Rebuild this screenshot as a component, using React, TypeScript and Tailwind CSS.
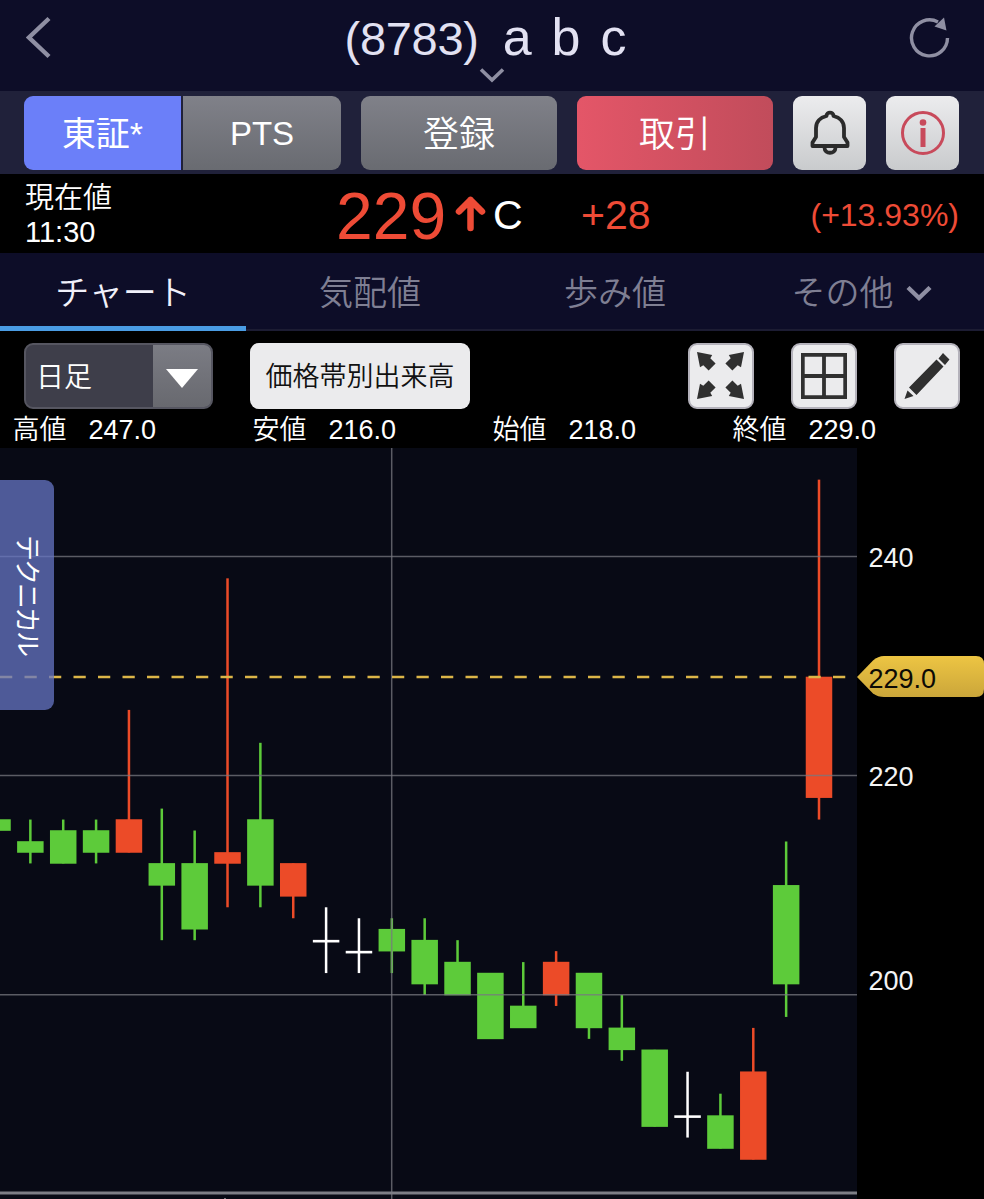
import React from "react";

type Kind = "up" | "down" | "flat";
type Candle = [kind: Kind, top: number, bottom: number, high: number, low: number];

// Newest session first.
const CANDLES: Candle[] = [
  ["up", 229, 218, 247, 216],
  ["down", 210, 201, 214, 198],
  ["up", 193, 185, 197, 185],
  ["down", 189, 186, 191, 186],
  ["flat", 189, 189, 193, 187],
  ["down", 195, 188, 195, 188],
  ["down", 197, 195, 200, 194],
  ["down", 202, 197, 202, 196],
  ["up", 203, 200, 204, 199],
  ["down", 199, 197, 203, 197],
  ["down", 202, 196, 202, 196],
  ["down", 203, 200, 205, 200],
  ["down", 205, 201, 207, 200],
  ["down", 206, 204, 207, 202],
  ["flat", 204, 204, 207, 202],
  ["flat", 205, 205, 208, 202],
  ["up", 212, 209, 212, 207],
  ["down", 216, 210, 223, 208],
  ["up", 213, 212, 238, 208],
  ["down", 212, 206, 215, 205],
  ["down", 212, 210, 217, 205],
  ["up", 216, 213, 226, 213],
  ["down", 215, 213, 216, 212],
  ["down", 215, 212, 216, 212],
  ["down", 214, 213, 216, 212],
  ["down", 216, 215, 216, 215],
];

const FILL: Record<Kind, string> = { up: "#ec4b28", down: "#5dcb3a", flat: "#ffffff" };

const priceY = (p: number) => 547 - (p - 200) * 10.965;

function Chart() {
  return (
    <svg className="block" width="984" height="751" viewBox="0 0 984 751">
      <defs>
        <linearGradient id="tag" x1="0" y1="0" x2="0" y2="1">
          <stop offset="0" stopColor="#edc543" />
          <stop offset="1" stopColor="#cba63a" />
        </linearGradient>
      </defs>
      <rect width="857" height="751" fill="#080a15" />
      {CANDLES.map(([kind, top, bottom, high, low], i) => {
        const x = 819 - i * 32.86;
        return (
          <g key={i} fill={FILL[kind]}>
            <rect x={x - 1.25} y={priceY(high)} width="2.5" height={priceY(low) - priceY(high)} />
            <rect
              x={x - 13.25}
              y={priceY(top) - 0.3}
              width="26.5"
              height={kind === "flat" ? 2.6 : priceY(bottom) - priceY(top) + 0.6}
            />
          </g>
        );
      })}
      <g stroke="#77787f" strokeOpacity="0.75" strokeWidth="1.5">
        <path d="M0 108.5H857M0 327.5H857M0 546.8H857" />
        <path d="M391.7 0V751" />
      </g>
      <path d="M0 229H846" stroke="#dcb648" strokeWidth="2.4" strokeDasharray="12.25 12.25" />
      <rect y="743.5" width="857" height="3" fill="#7d7e86" />
      <rect x="224" y="750" width="2" height="1" fill="#77787f" />
      <path
        d="M857 229L873 212.5Q878 208 884 208H976Q984 208 984 216V241Q984 249 976 249H884Q878 249 873 245.5Z"
        fill="url(#tag)"
      />
      <g fontFamily="Liberation Sans, Arial, sans-serif" fontSize="27" fill="#f4f4f4">
        <text x="868.5" y="118.5">240</text>
        <text x="868.5" y="338">220</text>
        <text x="868.5" y="541.5">200</text>
        <text x="868.5" y="239.5" fill="#0c0a05">229.0</text>
      </g>
    </svg>
  );
}

function Chevron({ className, stroke }: { className: string; stroke: number }) {
  return (
    <svg className={className} width="26" height="16" viewBox="0 0 26 16" fill="none" stroke="#8f8fa3" strokeWidth={stroke}>
      <path d="M2 1.5L13 12L24 1.5" />
    </svg>
  );
}

function ExpandIcon() {
  const arrow = "M0 0L15.2 3L13.3 6.3L18.6 11.6L11.6 18.6L6.3 13.3L3 15.2Z";
  return (
    <svg width="48" height="48" viewBox="0 0 48 48" fill="#303030">
      <path d={arrow} />
      <path d={arrow} transform="translate(47 0) scale(-1 1)" />
      <path d={arrow} transform="translate(0 47) scale(1 -1)" />
      <path d={arrow} transform="translate(47 47) scale(-1 -1)" />
    </svg>
  );
}

const STATS = [
  ["高値", "247.0"],
  ["安値", "216.0"],
  ["始値", "218.0"],
  ["終値", "229.0"],
];

const iconButton =
  "flex h-[74px] w-[73px] shrink-0 items-center justify-center rounded-[9px] bg-linear-to-b from-[#ececee] to-[#c9cbcd]";
const toolButton =
  "flex h-[66px] w-[66px] items-center justify-center rounded-[9px] border-2 border-[#b4b2bb] bg-[#ebebed]";

export default function App() {
  return (
    <div className="flex h-[1199px] w-[984px] flex-col overflow-hidden bg-black font-['Liberation_Sans','Noto_Sans_CJK_JP',sans-serif] text-white">
      <header className="relative flex h-[91px] shrink-0 items-start justify-between bg-[#0d0d28] pr-[33px] pl-[26px]">
        <button className="pt-[16px]">
          <svg width="26" height="44" viewBox="0 0 26 44" fill="none" stroke="#8f8fa3" strokeWidth="4.4">
            <path d="M23 2.5L3 21.5L23 40.5" />
          </svg>
        </button>
        <h1 className="flex items-baseline pt-[11px] pl-[10px] leading-none whitespace-pre text-[#e2e1f2]">
          <span className="text-[47px] tracking-[-0.3px]">(8783)</span>
          <span className="pl-[24px] text-[52px] [word-spacing:5.5px]">a b c</span>
        </h1>
        <button className="pt-[17px]">
          <svg width="42" height="42" viewBox="0 0 42 42" fill="none">
            <path d="M38.5 21A18 18 0 1 1 29 5" stroke="#8f8fa3" strokeWidth="3.4" />
            <path d="M35 .5L37.5 13.5L25.5 9.5Z" fill="#8f8fa3" />
          </svg>
        </button>
        <Chevron className="absolute top-[68px] left-[479px]" stroke={3.6} />
      </header>

      <nav className="flex h-[83px] shrink-0 gap-5 bg-[#20213a] pt-[5px] pl-6">
        <div className="flex h-[74px] w-[317px] shrink-0 gap-[2px] text-[34px]">
          <button className="flex w-[157px] items-center justify-center rounded-l-[9px] bg-[#6b7ff9] pt-[3px]">東証*</button>
          <button className="flex flex-1 items-center justify-center rounded-r-[9px] bg-linear-to-b from-[#808189] to-[#696b71] pt-[2px] text-[33px]">PTS</button>
        </div>
        <button className="flex h-[74px] w-[196px] shrink-0 items-center justify-center rounded-[9px] bg-linear-to-b from-[#808189] to-[#696b71] pt-[3px] text-[36px] font-[350]">登録</button>
        <button className="flex h-[74px] w-[196px] shrink-0 items-center justify-center rounded-[9px] bg-linear-to-r from-[#e45668] to-[#c14c5b] pt-[3px] text-[36px] font-[350]">取引</button>
        <button className={iconButton}>
          <svg width="42" height="46" viewBox="0 0 42 46" fill="none" stroke="#2b2b2b" strokeWidth="3.8" strokeLinejoin="round">
            <path d="M3.5 36V32.5L7 27V18C7 12 11 7.5 17.5 6C17.5 1.5 24.5 1.5 24.5 6C31 7.5 35 12 35 18V27L38.5 32.5V36Z" />
            <path d="M15.5 37.5C15.5 44.5 26.5 44.5 26.5 37.5" />
          </svg>
        </button>
        <button className={iconButton}>
          <svg width="46" height="46" viewBox="0 0 46 46" fill="#c84a5b">
            <circle cx="23" cy="23" r="20.5" fill="none" stroke="#c84a5b" strokeWidth="3" />
            <circle cx="23" cy="12.5" r="3.3" />
            <rect x="20.5" y="18" width="5" height="19" />
          </svg>
        </button>
      </nav>

      <section className="flex h-[79px] shrink-0 items-center pr-[25px] pl-[25px]">
        <div className="flex w-[311px] flex-col pt-[2px] text-[29px] leading-[34px]">
          <span className="font-[350]">現在値</span>
          <span>11:30</span>
        </div>
        <span className="w-[120px] pt-[4px] text-[66px] leading-none text-[#ee4b36]">229</span>
        <svg className="-ml-px" width="32" height="38" viewBox="0 0 32 38" fill="none" stroke="#ee4b36" strokeWidth="6.5" strokeLinecap="round" strokeLinejoin="round">
          <path d="M15.5 33V5M4 16.5L15.5 5L27 16.5" />
        </svg>
        <span className="w-[88px] pl-[6px] pt-[3px] text-[41px] leading-none">C</span>
        <span className="pt-[3px] pl-[6px] text-[41px] leading-none text-[#ee4b36]">+28</span>
        <span className="ml-auto pt-[2px] text-[32px] leading-none text-[#ee4b36]">(+13.93%)</span>
      </section>

      <nav className="grid h-[78px] shrink-0 grid-cols-4 border-b-2 border-[#1c1c33] bg-[#0d0d28] text-[34px] leading-none font-[350] text-[#7f7f93]">
        <button className="relative flex items-center justify-center pt-[3px] text-[#f0f0fa]">
          チャート
          <span className="absolute inset-x-0 -bottom-[2px] h-[5px] bg-[#4a9ce4]" />
        </button>
        <button className="flex items-center justify-center pt-[3px] pl-[2px]">気配値</button>
        <button className="flex items-center justify-center pt-[3px]">歩み値</button>
        <button className="flex items-center justify-center gap-[12px] pt-[3px] pl-px">
          その他
          <Chevron className="mt-[3px]" stroke={4.4} />
        </button>
      </nav>

      <section className="flex h-[78px] shrink-0 items-start pt-[12px] pl-6">
        <button className="flex h-[66px] w-[189px] overflow-hidden rounded-[9px] border-2 border-[#565661] bg-[#3e3e4a] text-[28px] font-[350]">
          <span className="flex h-full w-[127px] items-center pt-[3px] pl-[10px]">日足</span>
          <span className="flex h-full flex-1 items-center justify-center bg-linear-to-b from-[#7b7c84] to-[#68696f] pt-[5px]">
            <svg width="32" height="19" viewBox="0 0 32 19" fill="#fff"><path d="M0 0H32L16 19Z" /></svg>
          </span>
        </button>
        <button className="ml-[37px] flex h-[66px] w-[220px] items-center justify-center rounded-[9px] bg-[#ebebed] pt-[3px] text-[27px] font-[350] text-[#111]">価格帯別出来高</button>
        <div className="ml-[218px] flex gap-[37px]">
          <button className={toolButton}><ExpandIcon /></button>
          <button className={toolButton}>
            <svg width="46" height="46" viewBox="0 0 46 46" fill="none" stroke="#303030" strokeWidth="3.8">
              <path d="M1.8 1.8H44.2V44.2H1.8ZM23 1.8V44.2M1.8 23H44.2" />
            </svg>
          </button>
          <button className={toolButton}>
            <svg width="46" height="46" viewBox="0 0 46 46" fill="#303030">
              <path d="M39 0L45.5 6.5L41 12L34.5 5.5ZM32.5 6.5L39.5 13.5L12.5 42L5 34.5ZM3.5 37.5L9.5 43L.5 46Z" />
            </svg>
          </button>
        </div>
      </section>

      <section className="grid h-[39px] shrink-0 grid-cols-[240px_240px_240px_240px] items-center pt-[3px] pl-[12px] text-[27px] leading-none">
        {STATS.map(([label, value]) => (
          <div key={label} className="flex items-center">
            <span className="w-[76.5px] pl-[0.5px] font-[350]">{label}</span>
            <span>{value}</span>
          </div>
        ))}
      </section>

      <main className="relative h-[751px] shrink-0">
        <Chart />
        <button className="absolute top-[32px] left-0 flex h-[230px] w-[54px] items-center justify-center rounded-r-[9px] bg-[#6676c4]/75 text-[26px] leading-none">
          <span className="rotate-90 tracking-[-2px] whitespace-nowrap">テクニカル</span>
        </button>
      </main>
    </div>
  );
}
